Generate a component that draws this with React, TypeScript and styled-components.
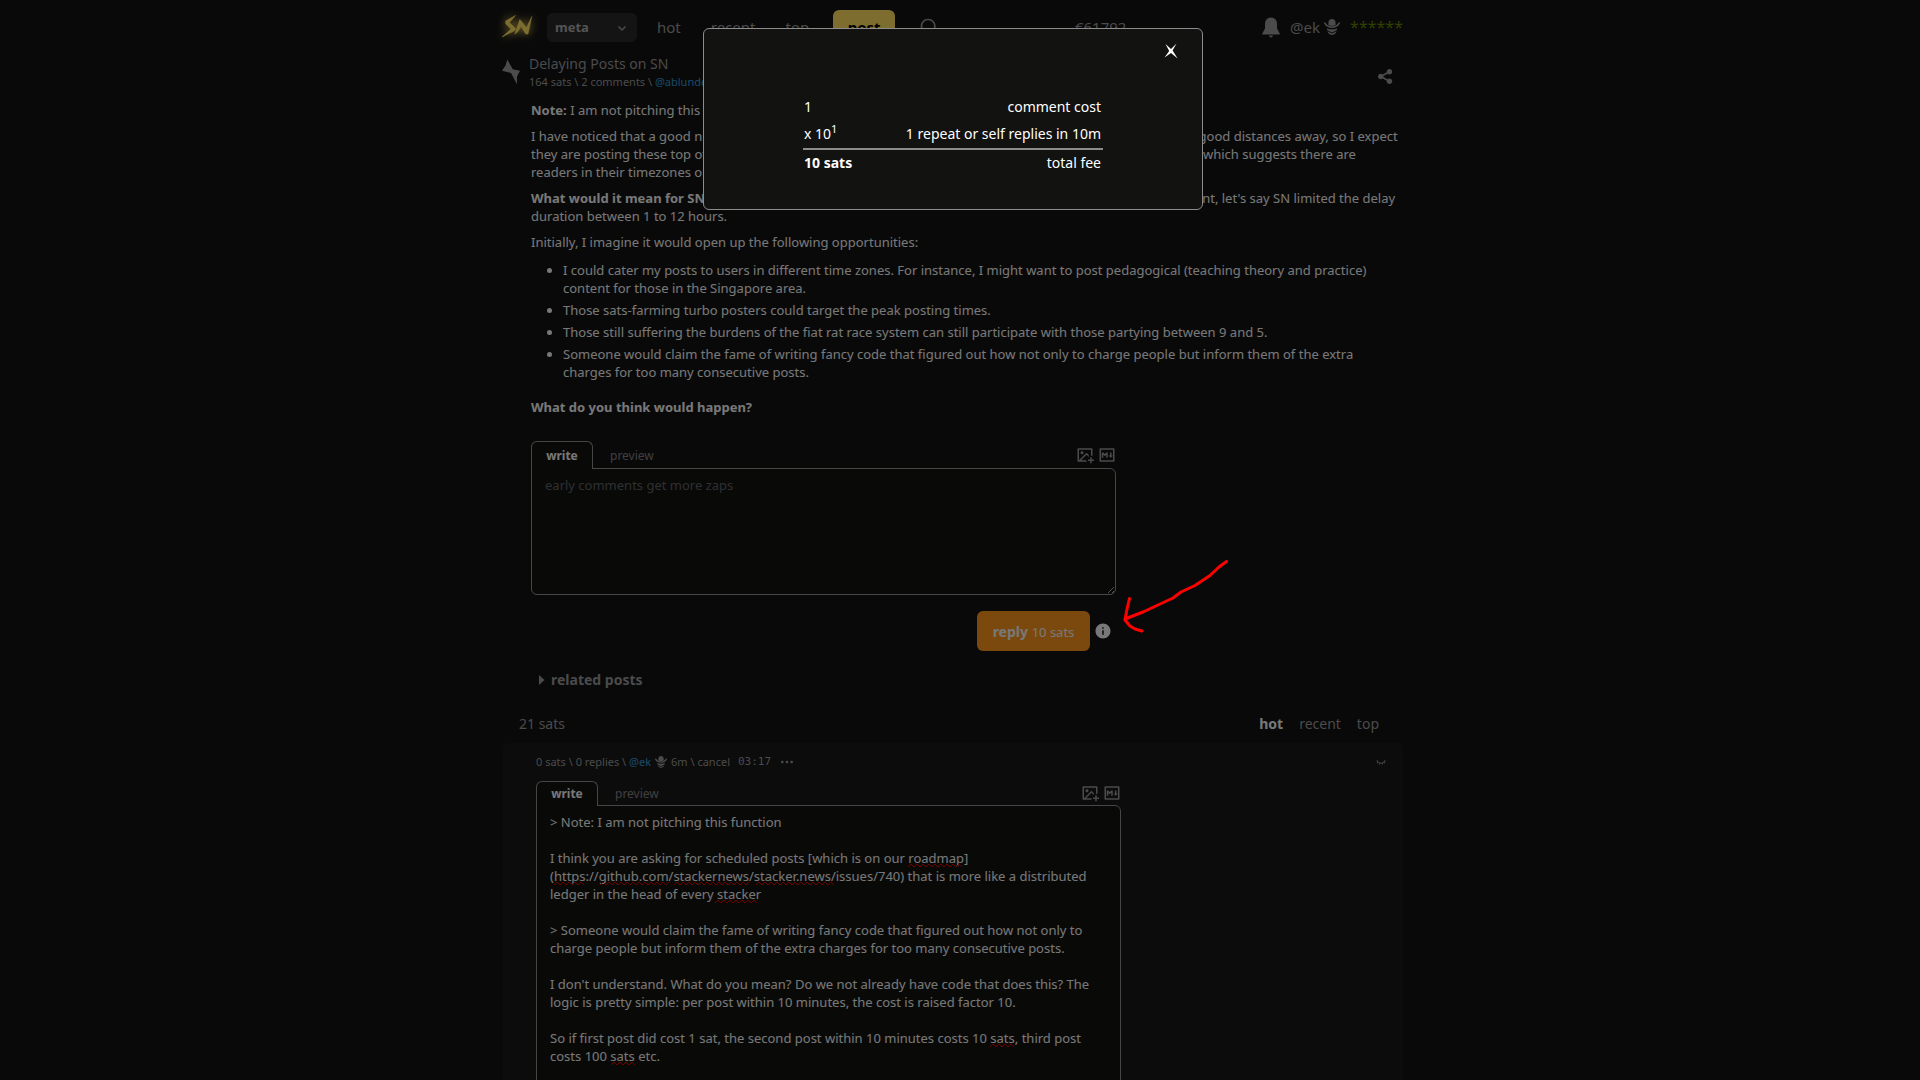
import React from "react";
import styled, { createGlobalStyle } from "styled-components";
import {
  RiImageAddLine,
  RiMarkdownLine,
  RiShareFill,
  RiInformationFill,
  RiEyeCloseLine,
  RiMoreFill,
  RiSearchLine,
} from "react-icons/ri";

const GlobalStyle = createGlobalStyle`
  *, *::before, *::after { box-sizing: border-box; }
  html, body { height: 100%; }
  body {
    margin: 0;
    overflow: hidden;
    background: #121213;
    color: #f0f0f0;
    font-family: "Noto Sans", "Open Sans", sans-serif;
    font-size: 15px;
    line-height: 24px;
  }
  #root { height: 100%; overflow: hidden; }
  button, select, textarea { font-family: inherit; }
  p, ul { margin: 0; }
  a { color: inherit; text-decoration: none; }
`;

const grey = "#969696";
const blue = "#2e99d1";

const Page = styled.div`
  height: 100%;
  overflow: hidden;
  padding-right: 14px;
`;

const Container = styled.div`
  max-width: 900px;
  margin: 0 auto;
`;

const Header = styled.header`
  display: flex;
  align-items: center;
  height: 54px;
  color: ${grey};
`;

const Logo = styled.svg`
  width: 46px;
  height: 40px;
  margin: 0 6px 0 -8px;
  filter: drop-shadow(0 0 5px #fada5e);
`;

const SelectBox = styled.label`
  position: relative;
  display: block;
  color: ${grey};
  svg {
    position: absolute;
    right: 10px;
    top: 10px;
    pointer-events: none;
  }
`;

const SubSelect = styled.select`
  display: block;
  appearance: none;
  width: 90px;
  height: 29px;
  padding: 0 8px;
  border: 0;
  border-radius: 6px;
  background: #29292a;
  color: #a6a6a6;
  font-size: 13px;
  font-weight: 700;
`;

const Nav = styled.nav`
  display: flex;
  align-items: center;
  gap: 30px;
  margin: 0 24px 0 20px;
`;

const PostButton = styled.button`
  width: 62px;
  height: 35px;
  border: 0;
  border-radius: 6px;
  background: #fada5e;
  color: #000;
  font-size: 15px;
  font-weight: 700;
`;

const IconButton = styled.button`
  display: inline-flex;
  padding: 0;
  border: 0;
  background: none;
  color: ${grey};
`;

const Search = styled(IconButton)`
  margin-left: 24px;
`;

const Price = styled.span`
  margin: 0 auto;
`;

const Account = styled.div`
  display: flex;
  align-items: center;
  gap: 10px;
`;

const Balance = styled.a`
  color: #5c8001;
  font-size: 16px;
`;

const Handle = styled.a`
  display: inline-flex;
  align-items: center;
  gap: 4px;
`;

const Post = styled.article`
  display: flex;
  align-items: flex-start;
  padding-top: 1px;
`;

const Bolt = styled.svg`
  width: 18px;
  height: 26px;
  margin: 4px 8px 0 0;
  overflow: visible;
`;

const PostHead = styled.div`
  flex: 1;
  color: ${grey};
`;

const Title = styled.h1`
  margin: 0;
  font-size: 14px;
  line-height: 18px;
  font-weight: 400;
`;

const Meta = styled.div`
  font-size: 11px;
  line-height: 18px;
`;

const UserLink = styled.a`
  color: ${blue};
`;

const Share = styled(IconButton)`
  margin: 12px 8px 0 0;
`;

const Body = styled.div`
  padding: 10px 0 0 28px;
  font-size: 13px;
  line-height: 18px;
  p {
    margin-bottom: 8px;
  }
  ul {
    margin: 10px 0 17px;
    padding-left: 32px;
  }
  li {
    margin-bottom: 4px;
  }
`;

const Form = styled.form`
  width: 585px;
  max-width: 100%;
`;

const ReplyForm = styled(Form)`
  margin: 25px 0 0 28px;
`;

const TabRow = styled.div<{ $height: number }>`
  display: flex;
  align-items: center;
  height: ${(p) => p.$height}px;
`;

const Tab = styled.button<{ $active?: boolean }>`
  align-self: stretch;
  z-index: 1;
  width: ${(p) => (p.$active ? "62px" : "auto")};
  margin-bottom: -1px;
  padding: 0 ${(p) => (p.$active ? 0 : 16)}px 1px;
  border: 1px solid ${(p) => (p.$active ? "#8c8c8c" : "transparent")};
  border-bottom: 0;
  border-radius: 6px 6px 0 0;
  background: ${(p) => (p.$active ? "#131310" : "none")};
  color: ${(p) => (p.$active ? "#f0f0f0" : "#808080")};
  font-size: 12px;
  font-weight: ${(p) => (p.$active ? 700 : 400)};
`;

const Tools = styled.div`
  display: flex;
  gap: 4px;
  margin-left: auto;
`;

const Editor = styled.div`
  position: relative;
`;

const TextArea = styled.textarea`
  display: block;
  width: 100%;
  padding: 7px 13px 10px;
  border: 1px solid #8c8c8c;
  border-radius: 0 6px 6px 6px;
  outline: 0;
  background: #131310;
  color: #f0f0f0;
  font-size: 13px;
  line-height: 18px;
  resize: vertical;
  overflow: hidden;
  &::placeholder {
    color: #5c6066;
    opacity: 1;
  }
`;

const Squiggles = styled.svg`
  position: absolute;
  left: 14px;
  top: 8px;
  pointer-events: none;
`;

const SubmitRow = styled.div`
  display: flex;
  justify-content: flex-end;
  align-items: center;
  gap: 4px;
  margin-top: 16px;
  padding-right: 4px;
`;

const ReplyButton = styled.button`
  width: 113px;
  height: 40px;
  border: 0;
  border-radius: 6px;
  background: #f7931a;
  color: #f0f0f0;
  font-size: 14px;
  font-weight: 700;
  small {
    font-size: 13px;
    font-weight: 400;
  }
`;

const Related = styled.button`
  display: flex;
  align-items: center;
  gap: 6px;
  margin: 17px 0 0 36px;
  padding: 0;
  border: 0;
  background: none;
  color: ${grey};
  font-size: 14px;
  line-height: 24px;
  font-weight: 700;
`;

const SortBar = styled.div`
  display: flex;
  justify-content: space-between;
  padding: 20px 24px 7px 16px;
  color: ${grey};
  font-size: 14px;
  line-height: 24px;
`;

const Sorts = styled.nav`
  display: flex;
  gap: 16px;
`;

const SortLink = styled.a<{ $active?: boolean }>`
  color: ${(p) => (p.$active ? "#f0f0f0" : grey)};
  font-weight: ${(p) => (p.$active ? 700 : 400)};
`;

const Comment = styled.section`
  padding: 10px 17px 0 33px;
  border-radius: 6px;
  background: #18181a;
`;

const CommentHead = styled.div`
  display: flex;
  align-items: center;
  gap: 4px;
  margin-bottom: 10px;
  color: ${grey};
  font-size: 11px;
  line-height: 18px;
`;

const Timer = styled.span`
  margin: 0 4px;
  font-family: "DejaVu Sans Mono", "Liberation Mono", monospace;
`;

const Collapse = styled(IconButton)`
  margin-left: auto;
`;

const Backdrop = styled.div`
  position: fixed;
  inset: 0;
  z-index: 10;
  padding: 28px 14px 0 0;
  background: rgba(0, 0, 0, 0.5);
`;

const Modal = styled.div`
  width: 500px;
  max-width: 100%;
  margin: 0 auto;
  padding: 14px 24px 32px;
  border: 1px solid #8c8c8c;
  border-radius: 6px;
  background: #121211;
`;

const CloseRow = styled.div`
  display: flex;
  justify-content: flex-end;
`;

const FeeTable = styled.table`
  width: 300px;
  margin: 35px auto 0;
  border-collapse: collapse;
  color: #fff;
  font-size: 14px;
  line-height: 24px;
  th,
  td {
    padding: 1px 2px 2px;
    text-align: right;
    font-weight: 400;
  }
  th {
    padding-left: 1px;
    text-align: left;
  }
  tfoot th {
    font-weight: 700;
  }
  tfoot tr {
    border-top: 2px solid #8c8c8c;
  }
  sup {
    font-size: 11px;
    line-height: 0;
  }
`;

const Arrow = styled.svg`
  position: absolute;
  z-index: 11;
  left: calc(50% + 155px);
  top: 555px;
  pointer-events: none;
`;

const Bell = () => (
  <svg width="18" height="21" viewBox="0 0 18 21" fill="currentColor" aria-hidden>
    <path d="M9 .500C5 .500 3 3.500 3 7v4.500L.300 16.400V17.500H17.700V16.400L15 11.500V7C15 3.500 13 .500 9 .500ZM7 18.500h4q-.500 2-2 2t-2-2Z" />
  </svg>
);

const Cowboy = ({ size }: { size: number }) => (
  <svg width={size} height={size} viewBox="0 0 16 16" fill="currentColor" aria-hidden>
    <path d="M4.300 6 4.600 2.500Q5 0 8 0t3.400 2.500L11.700 6Q8 8 4.300 6Z" />
    <path d="M.8 4.200Q3 8.200 8 8.200T15.200 4.200" fill="none" stroke="currentColor" strokeWidth="1.600" strokeLinecap="round" />
    <path d="M3 9.400Q8 11.200 13 9.400L13 11 8 13.600 3 11ZM3.400 12.200 8 14.600l4.600-2.400Q11 16 8 16T3.400 12.200Z" />
  </svg>
);

function wave(width: number, x: number, y: number) {
  let d = `M${x} ${y + 3}`;
  for (let i = 3, up = true; i <= width; i += 3, up = !up) {
    d += `L${x + i} ${up ? y : y + 3}`;
  }
  return d;
}

// Misspelled ranges: line number, start and width inside the text box.
const misspelled = [
  { line: 2, x: 358, width: 55 },
  { line: 3, x: 4, width: 32 },
  { line: 3, x: 50, width: 69 },
  { line: 3, x: 124, width: 76 },
  { line: 3, x: 206, width: 80 },
  { line: 4, x: 165, width: 44 },
  { line: 12, x: 440, width: 26 },
  { line: 13, x: 61, width: 26 },
];

const draft = `> Note: I am not pitching this function

I think you are asking for scheduled posts [which is on our roadmap](https://github.com/stackernews/stacker.news/issues/740) that is more like a distributed ledger in the head of every stacker

> Someone would claim the fame of writing fancy code that figured out how not only to charge people but inform them of the extra charges for too many consecutive posts.

I don't understand. What do you mean? Do we not already have code that does this? The logic is pretty simple: per post within 10 minutes, the cost is raised factor 10.

So if first post did cost 1 sat, the second post within 10 minutes costs 10 sats, third post costs 100 sats etc.
`;

const EditorTabs = ({ height }: { height: number }) => (
  <TabRow $height={height}>
    <Tab type="button" $active>write</Tab>
    <Tab type="button">preview</Tab>
    <Tools>
      <IconButton type="button" aria-label="add image"><RiImageAddLine size={18} /></IconButton>
      <IconButton type="button" aria-label="markdown help"><RiMarkdownLine size={18} /></IconButton>
    </Tools>
  </TabRow>
);

export default function App() {
  return (
    <>
      <GlobalStyle />
      <Page>
        <Container>
          <Header>
            <Logo viewBox="0 0 46 40" fill="#fada5e" role="img" aria-label="SN">
              <path d="M20.500 8.500 10.500 14 10.800 17 16 22 7 30 20 23.500 20.500 21.500 14.500 15.500Z" stroke="#fada5e" strokeWidth=".6" />
              <path d="M19.800 27 24.800 12.500 31.500 20.500 36.800 9.500 33 27 30.800 27 26 19.500 23 24.500Z" stroke="#fada5e" strokeWidth=".6" />
            </Logo>
            <SelectBox>
              <SubSelect aria-label="territory" defaultValue="meta">
                <option value="meta">meta</option>
              </SubSelect>
              <svg width="10" height="10" viewBox="0 0 10 10" fill="none" stroke="currentColor" strokeWidth="1.500">
                <path d="m1.500 3.500 3.500 3.500 3.500-3.500" />
              </svg>
            </SelectBox>
            <Nav>
              <a href="#hot">hot</a>
              <a href="#recent">recent</a>
              <a href="#top">top</a>
            </Nav>
            <PostButton type="button">post</PostButton>
            <Search type="button" aria-label="search"><RiSearchLine size={20} /></Search>
            <Price>€61792</Price>
            <Account>
              <IconButton type="button" aria-label="notifications"><Bell /></IconButton>
              <Handle href="#ek">@ek <Cowboy size={16} /></Handle>
              <Balance href="#wallet">******</Balance>
            </Account>
          </Header>

          <Post>
            <Bolt viewBox="0 0 18 26" fill={grey} aria-hidden>
              <path d="M4.300.500 2.500 6.500-1 11.700 8 14 14 25.300 14 17.500 17 11.700 9.800 10.300Z" />
            </Bolt>
            <PostHead>
              <Title>Delaying Posts on SN</Title>
              <Meta>
                164 sats \ 2 comments \ <UserLink href="#ablundell">@ablundell</UserLink> 11h
              </Meta>
            </PostHead>
            <Share type="button" aria-label="share"><RiShareFill size={19} /></Share>
          </Post>

          <Body>
            <p><strong>Note:</strong> I am not pitching this function.</p>
            <p>
              I have noticed that a good number of posts are published by stackers who seem to live in time zones that are good distances away, so I expect
              <br />
              they are posting these top of the morning in their own part of the world and the others happily reply early on, which suggests there are
              <br />
              readers in their timezones or who stay up late.
            </p>
            <p>
              <strong>What would it mean for SN to delay posts?</strong> For the sake of this modest thought experiment and the argument, let's say SN limited the delay
              <br />
              duration between 1 to 12 hours.
            </p>
            <p>Initially, I imagine it would open up the following opportunities:</p>
            <ul>
              <li>I could cater my posts to users in different time zones. For instance, I might want to post pedagogical (teaching theory and practice)<br />content for those in the Singapore area.</li>
              <li>Those sats-farming turbo posters could target the peak posting times.</li>
              <li>Those still suffering the burdens of the fiat rat race system can still participate with those partying between 9 and 5.</li>
              <li>Someone would claim the fame of writing fancy code that figured out how not only to charge people but inform them of the extra<br />charges for too many consecutive posts.</li>
            </ul>
            <p><strong>What do you think would happen?</strong></p>
          </Body>

          <ReplyForm>
            <EditorTabs height={27} />
            <Editor>
              <TextArea aria-label="reply" rows={6} placeholder="early comments get more zaps" />
            </Editor>
            <SubmitRow>
              <ReplyButton type="button">reply <small>10 sats</small></ReplyButton>
              <IconButton type="button" aria-label="fee details"><RiInformationFill size={18} color="#f0f0f0" /></IconButton>
            </SubmitRow>
          </ReplyForm>

          <Related type="button">
            <svg width="6" height="10" viewBox="0 0 6 10" fill="currentColor" aria-hidden><path d="M0 0l5.500 5L0 10Z" /></svg>
            related posts
          </Related>

          <SortBar>
            <span>21 sats</span>
            <Sorts>
              <SortLink href="#hot" $active>hot</SortLink>
              <SortLink href="#recent">recent</SortLink>
              <SortLink href="#top">top</SortLink>
            </Sorts>
          </SortBar>

          <Comment>
            <CommentHead>
              <span>0 sats \ 0 replies \ <UserLink href="#ek">@ek</UserLink></span>
              <Cowboy size={12} />
              <span>6m \ cancel</span>
              <Timer>03:17</Timer>
              <IconButton type="button" aria-label="more"><RiMoreFill size={16} /></IconButton>
              <Collapse type="button" aria-label="collapse"><RiEyeCloseLine size={10} /></Collapse>
            </CommentHead>
            <Form>
              <EditorTabs height={24} />
              <Editor>
                <TextArea aria-label="edit comment" rows={18} spellCheck={false} defaultValue={draft} />
                <Squiggles width="555" height="270" fill="none" stroke="#e00000" aria-hidden>
                  {misspelled.map((m) => (
                    <path key={`${m.line}-${m.x}`} d={wave(m.width, m.x, m.line * 18 + 15)} />
                  ))}
                </Squiggles>
              </Editor>
            </Form>
          </Comment>
        </Container>
      </Page>

      <Backdrop>
        <Modal role="dialog" aria-modal="true" aria-label="fee details">
          <CloseRow>
            <IconButton type="button" aria-label="close">
              <svg width="14" height="16" viewBox="0 0 14 16" fill="#fff">
                <path d="M1.500 1 7 6 12.500.500 8.600 7.600 13.600 15.500 7 10 .5 14.500 5.200 8Z" />
              </svg>
            </IconButton>
          </CloseRow>
          <FeeTable>
            <tbody>
              <tr><th scope="row">1</th><td>comment cost</td></tr>
              <tr><th scope="row">x 10<sup>1</sup></th><td>1 repeat or self replies in 10m</td></tr>
            </tbody>
            <tfoot>
              <tr><th scope="row">10 sats</th><td>total fee</td></tr>
            </tfoot>
          </FeeTable>
        </Modal>
      </Backdrop>

      <Arrow width="115" height="85" viewBox="0 0 115 85" fill="none" stroke="#f00" strokeWidth="3" strokeLinecap="round" strokeLinejoin="round" aria-hidden>
        <path d="M111.500 6.500 104 12 95 20.500 80 30.500 66 37 58 43 43 50 28 57 10 64" />
        <path d="M14.500 43.500 12 54 10 65 15 71 20 74 27 76" />
      </Arrow>
    </>
  );
}
